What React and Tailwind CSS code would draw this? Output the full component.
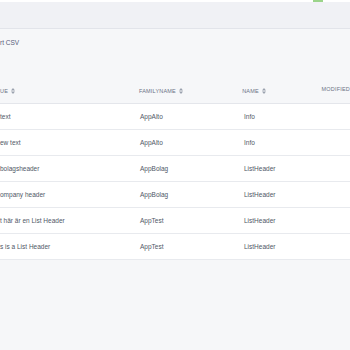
import React from 'react';

const rows = [
  { value: 'text', family: 'AppAlto', name: 'Info' },
  { value: 'ew text', family: 'AppAlto', name: 'Info' },
  { value: 'bolagsheader', family: 'AppBolag', name: 'ListHeader' },
  { value: 'ompany header', family: 'AppBolag', name: 'ListHeader' },
  { value: 't här är en List Header', family: 'AppTest', name: 'ListHeader' },
  { value: 's is a List Header', family: 'AppTest', name: 'ListHeader' },
];

const SortIcon = () => (
  <svg width="4" height="6" viewBox="0 0 4 6" className="ml-[3px] inline-block">
    <path d="M2 0 L4 2.4 H0 Z" fill="#9aa1ae" />
    <path d="M2 6 L4 3.6 H0 Z" fill="#9aa1ae" />
  </svg>
);

export default function App() {
  return (
    <div
      className="w-[350px] h-[350px] overflow-hidden bg-[#f6f7f9]"
      style={{ fontFamily: '"Liberation Sans", Arial, sans-serif' }}
    >
      {/* top strip with the tail of a green button */}
      <div className="relative h-[2px] bg-white">
        <div className="absolute left-[313px] top-0 h-[2px] w-[10px] bg-[#9bd48a]" />
      </div>

      {/* toolbar */}
      <div className="h-[27px] bg-[#f0f1f5] border-b border-[#e2e4ea]" />

      {/* export link */}
      <div className="h-[27px] flex items-center text-[6.5px] text-[#56607a]">rt CSV</div>

      {/* table header */}
      <div className="h-[48px] flex items-end border-b border-[#e4e6eb] pb-[8px] text-[5.5px] uppercase tracking-[0.2px] text-[#6b7385]">
        <div className="w-[140px] flex items-center">ue<SortIcon /></div>
        <div className="w-[104px] flex items-center">familyname<SortIcon /></div>
        <div className="w-[80px] flex items-center">name<SortIcon /></div>
        <div className="flex-1 mb-[2px] whitespace-nowrap">modified</div>
      </div>

      {/* rows */}
      <div className="bg-white">
        {rows.map((r, i) => (
          <div
            key={i}
            className="h-[26px] flex items-center border-b border-[#e8eaee] text-[6.5px] text-[#4f5766]"
          >
            <div className="w-[140px] whitespace-nowrap">{r.value}</div>
            <div className="w-[104px]">{r.family}</div>
            <div className="w-[80px]">{r.name}</div>
            <div className="flex-1" />
          </div>
        ))}
      </div>
    </div>
  );
}
